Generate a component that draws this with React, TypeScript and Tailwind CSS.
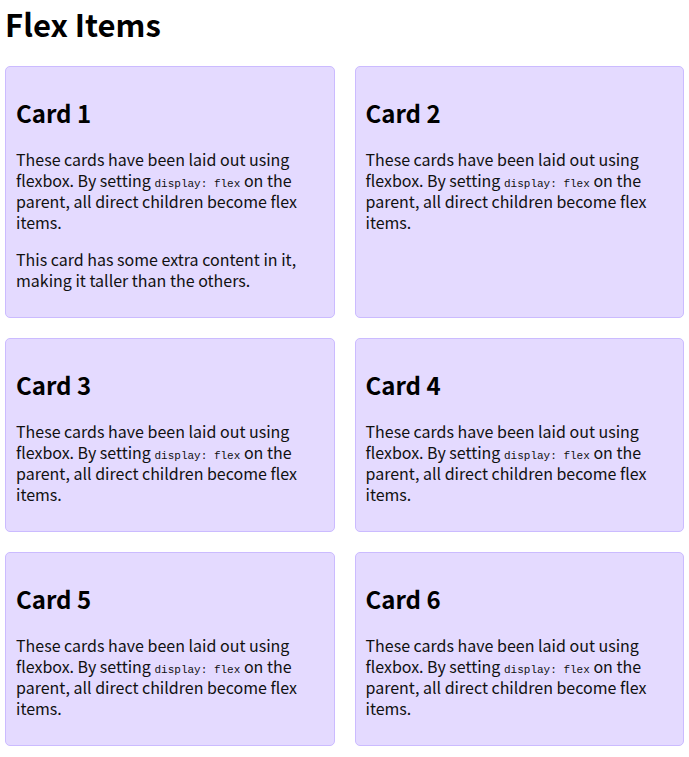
import React from "react";

const cards = [
  { title: "Card 1", extra: true },
  { title: "Card 2" },
  { title: "Card 3" },
  { title: "Card 4" },
  { title: "Card 5" },
  { title: "Card 6" },
];

const Card = ({ title, extra }: { title: string; extra?: boolean }) => {
  return (
    <div className="rounded-[5px] border border-[#cbbbff] bg-[#e4daff] px-[10px] pt-[30px] pb-[10px]">
      <h2 className="text-2xl leading-8 font-bold text-black">{title}</h2>
      <p className="mt-5 mb-4 text-base leading-[21px] text-[#111]">
        These cards have been laid out using flexbox. By setting{" "}
        <code className="font-['Liberation_Mono',monospace] text-[11px] leading-none">
          display: flex
        </code>{" "}
        on the parent, all direct children become flex items.
      </p>
      {extra && (
        <p className="mb-4 text-base leading-[21px] text-[#111]">
          This card has some extra content in it, making it taller than the
          others.
        </p>
      )}
    </div>
  );
};

export default function App() {
  return (
    <div className="min-h-screen bg-white px-[5px] font-['Noto_Sans_CJK_KR',sans-serif]">
      <h1 className="pt-[4px] text-[31px] leading-10 font-bold text-black">
        Flex Items
      </h1>
      <div className="mt-[22px] grid grid-cols-2 gap-5">
        {cards.map((card) => (
          <Card key={card.title} {...card} />
        ))}
      </div>
    </div>
  );
}
